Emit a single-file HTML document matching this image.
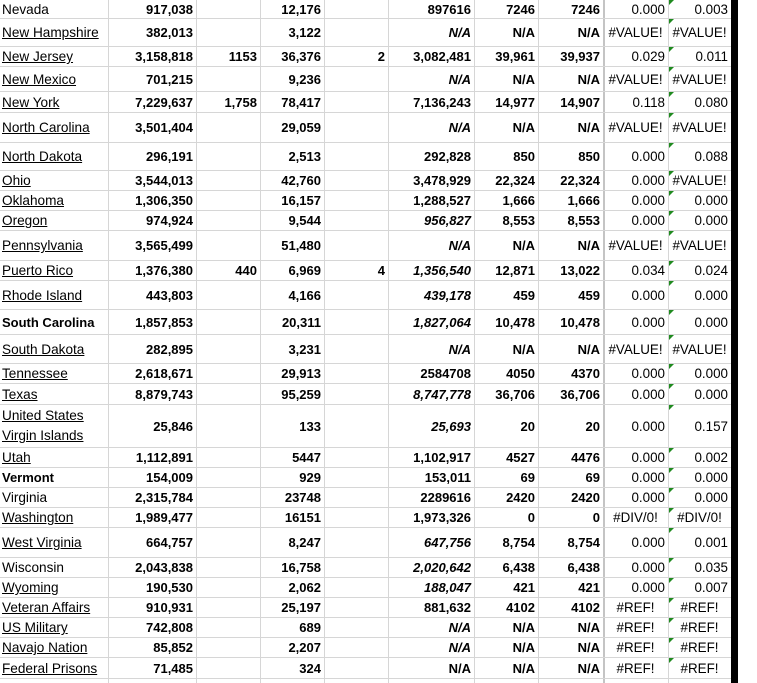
<!DOCTYPE html>
<html><head><meta charset="utf-8"><style>
*{margin:0;padding:0;box-sizing:border-box}
body{width:757px;height:683px;background:#fff;position:relative;overflow:hidden;font-family:"Liberation Sans",Arial,sans-serif;font-size:13px;color:#000}
.v{position:absolute;top:0;width:1px;height:683px;background:#d6d6d6}
.r{position:absolute;left:0;width:731px;border-bottom:1px solid #d6d6d6}
.r span{position:absolute;top:0;bottom:0;display:flex;align-items:center;justify-content:flex-end;padding-right:3px;font-weight:bold;white-space:nowrap}
.r .a{left:0;width:108px;justify-content:flex-start;padding-left:2px;font-weight:normal;text-decoration:underline;font-size:13.6px}
.r .a.p{text-decoration:none}.r .a.bd{font-weight:bold;text-decoration:none;font-size:13px}
.b{left:108px;width:88px}.c{left:196px;width:64px}.d{left:260px;width:64px}.e{left:324px;width:64px}
.f{left:388px;width:86px}.g{left:474px;width:64px}.h{left:538px;width:65px}
.r .i{left:603px;width:65px;font-weight:normal;font-size:13.4px}.r .j{left:668px;width:63px;font-weight:normal;font-size:13.4px}
.r .x{justify-content:center;padding-right:0}
.it{font-style:italic}
.r .j::before{content:"";position:absolute;left:1px;top:0;border-top:5px solid #1f8a1f;border-right:5px solid transparent}
.bar{position:absolute;left:731px;top:0;width:7px;height:683px;background:#000}
</style></head><body>
<div class="v" style="left:108px"></div><div class="v" style="left:196px"></div><div class="v" style="left:260px"></div><div class="v" style="left:324px"></div><div class="v" style="left:388px"></div><div class="v" style="left:474px"></div><div class="v" style="left:538px"></div><div class="v" style="left:603px;background:#c4c4c4;width:2px"></div><div class="v" style="left:668px"></div>

<div class="r" style="top:0;height:19px"><span class="a p">Nevada</span><span class="b">917,038</span><span class="d">12,176</span><span class="f">897616</span><span class="g">7246</span><span class="h">7246</span><span class="i">0.000</span><span class="j">0.003</span></div>
<div class="r" style="top:19px;height:28px"><span class="a">New Hampshire</span><span class="b">382,013</span><span class="d">3,122</span><span class="f it">N/A</span><span class="g">N/A</span><span class="h">N/A</span><span class="i x">#VALUE!</span><span class="j x">#VALUE!</span></div>
<div class="r" style="top:47px;height:20px"><span class="a">New Jersey</span><span class="b">3,158,818</span><span class="c">1153</span><span class="d">36,376</span><span class="e">2</span><span class="f">3,082,481</span><span class="g">39,961</span><span class="h">39,937</span><span class="i">0.029</span><span class="j">0.011</span></div>
<div class="r" style="top:67px;height:25px"><span class="a">New Mexico</span><span class="b">701,215</span><span class="d">9,236</span><span class="f it">N/A</span><span class="g">N/A</span><span class="h">N/A</span><span class="i x">#VALUE!</span><span class="j x">#VALUE!</span></div>
<div class="r" style="top:92px;height:21px"><span class="a">New York</span><span class="b">7,229,637</span><span class="c">1,758</span><span class="d">78,417</span><span class="f">7,136,243</span><span class="g">14,977</span><span class="h">14,907</span><span class="i">0.118</span><span class="j">0.080</span></div>
<div class="r" style="top:113px;height:30px"><span class="a">North Carolina</span><span class="b">3,501,404</span><span class="d">29,059</span><span class="f it">N/A</span><span class="g">N/A</span><span class="h">N/A</span><span class="i x">#VALUE!</span><span class="j x">#VALUE!</span></div>
<div class="r" style="top:143px;height:28px"><span class="a">North Dakota</span><span class="b">296,191</span><span class="d">2,513</span><span class="f">292,828</span><span class="g">850</span><span class="h">850</span><span class="i">0.000</span><span class="j">0.088</span></div>
<div class="r" style="top:171px;height:20px"><span class="a">Ohio</span><span class="b">3,544,013</span><span class="d">42,760</span><span class="f">3,478,929</span><span class="g">22,324</span><span class="h">22,324</span><span class="i">0.000</span><span class="j x">#VALUE!</span></div>
<div class="r" style="top:191px;height:20px"><span class="a">Oklahoma</span><span class="b">1,306,350</span><span class="d">16,157</span><span class="f">1,288,527</span><span class="g">1,666</span><span class="h">1,666</span><span class="i">0.000</span><span class="j">0.000</span></div>
<div class="r" style="top:211px;height:20px"><span class="a">Oregon</span><span class="b">974,924</span><span class="d">9,544</span><span class="f it">956,827</span><span class="g">8,553</span><span class="h">8,553</span><span class="i">0.000</span><span class="j">0.000</span></div>
<div class="r" style="top:231px;height:30px"><span class="a">Pennsylvania</span><span class="b">3,565,499</span><span class="d">51,480</span><span class="f it">N/A</span><span class="g">N/A</span><span class="h">N/A</span><span class="i x">#VALUE!</span><span class="j x">#VALUE!</span></div>
<div class="r" style="top:261px;height:20px"><span class="a">Puerto Rico</span><span class="b">1,376,380</span><span class="c">440</span><span class="d">6,969</span><span class="e">4</span><span class="f it">1,356,540</span><span class="g">12,871</span><span class="h">13,022</span><span class="i">0.034</span><span class="j">0.024</span></div>
<div class="r" style="top:281px;height:29px"><span class="a">Rhode Island</span><span class="b">443,803</span><span class="d">4,166</span><span class="f it">439,178</span><span class="g">459</span><span class="h">459</span><span class="i">0.000</span><span class="j">0.000</span></div>
<div class="r" style="top:310px;height:25px"><span class="a bd">South Carolina</span><span class="b">1,857,853</span><span class="d">20,311</span><span class="f it">1,827,064</span><span class="g">10,478</span><span class="h">10,478</span><span class="i">0.000</span><span class="j">0.000</span></div>
<div class="r" style="top:335px;height:29px"><span class="a">South Dakota</span><span class="b">282,895</span><span class="d">3,231</span><span class="f it">N/A</span><span class="g">N/A</span><span class="h">N/A</span><span class="i x">#VALUE!</span><span class="j x">#VALUE!</span></div>
<div class="r" style="top:364px;height:20px"><span class="a">Tennessee</span><span class="b">2,618,671</span><span class="d">29,913</span><span class="f">2584708</span><span class="g">4050</span><span class="h">4370</span><span class="i">0.000</span><span class="j">0.000</span></div>
<div class="r" style="top:384px;height:21px"><span class="a">Texas</span><span class="b">8,879,743</span><span class="d">95,259</span><span class="f it">8,747,778</span><span class="g">36,706</span><span class="h">36,706</span><span class="i">0.000</span><span class="j">0.000</span></div>
<div class="r" style="top:405px;height:43px"><span class="a" style="flex-direction:column;align-items:flex-start;justify-content:center;line-height:20px"><u>United States</u><u>Virgin Islands</u></span><span class="b">25,846</span><span class="d">133</span><span class="f it">25,693</span><span class="g">20</span><span class="h">20</span><span class="i">0.000</span><span class="j">0.157</span></div>
<div class="r" style="top:448px;height:20px"><span class="a">Utah</span><span class="b">1,112,891</span><span class="d">5447</span><span class="f">1,102,917</span><span class="g">4527</span><span class="h">4476</span><span class="i">0.000</span><span class="j">0.002</span></div>
<div class="r" style="top:468px;height:20px"><span class="a bd">Vermont</span><span class="b">154,009</span><span class="d">929</span><span class="f">153,011</span><span class="g">69</span><span class="h">69</span><span class="i">0.000</span><span class="j">0.000</span></div>
<div class="r" style="top:488px;height:20px"><span class="a p">Virginia</span><span class="b">2,315,784</span><span class="d">23748</span><span class="f">2289616</span><span class="g">2420</span><span class="h">2420</span><span class="i">0.000</span><span class="j">0.000</span></div>
<div class="r" style="top:508px;height:20px"><span class="a">Washington</span><span class="b">1,989,477</span><span class="d">16151</span><span class="f">1,973,326</span><span class="g">0</span><span class="h">0</span><span class="i x">#DIV/0!</span><span class="j x">#DIV/0!</span></div>
<div class="r" style="top:528px;height:30px"><span class="a">West Virginia</span><span class="b">664,757</span><span class="d">8,247</span><span class="f it">647,756</span><span class="g">8,754</span><span class="h">8,754</span><span class="i">0.000</span><span class="j">0.001</span></div>
<div class="r" style="top:558px;height:20px"><span class="a p">Wisconsin</span><span class="b">2,043,838</span><span class="d">16,758</span><span class="f it">2,020,642</span><span class="g">6,438</span><span class="h">6,438</span><span class="i">0.000</span><span class="j">0.035</span></div>
<div class="r" style="top:578px;height:20px"><span class="a">Wyoming</span><span class="b">190,530</span><span class="d">2,062</span><span class="f it">188,047</span><span class="g">421</span><span class="h">421</span><span class="i">0.000</span><span class="j">0.007</span></div>
<div class="r" style="top:598px;height:20px"><span class="a">Veteran Affairs</span><span class="b">910,931</span><span class="d">25,197</span><span class="f">881,632</span><span class="g">4102</span><span class="h">4102</span><span class="i x">#REF!</span><span class="j x">#REF!</span></div>
<div class="r" style="top:618px;height:20px"><span class="a">US Military</span><span class="b">742,808</span><span class="d">689</span><span class="f it">N/A</span><span class="g">N/A</span><span class="h">N/A</span><span class="i x">#REF!</span><span class="j x">#REF!</span></div>
<div class="r" style="top:638px;height:20px"><span class="a">Navajo Nation</span><span class="b">85,852</span><span class="d">2,207</span><span class="f it">N/A</span><span class="g">N/A</span><span class="h">N/A</span><span class="i x">#REF!</span><span class="j x">#REF!</span></div>
<div class="r" style="top:658px;height:21px"><span class="a">Federal Prisons</span><span class="b">71,485</span><span class="d">324</span><span class="f">N/A</span><span class="g">N/A</span><span class="h">N/A</span><span class="i x">#REF!</span><span class="j x">#REF!</span></div>
<div class="bar"></div>
</body></html>
